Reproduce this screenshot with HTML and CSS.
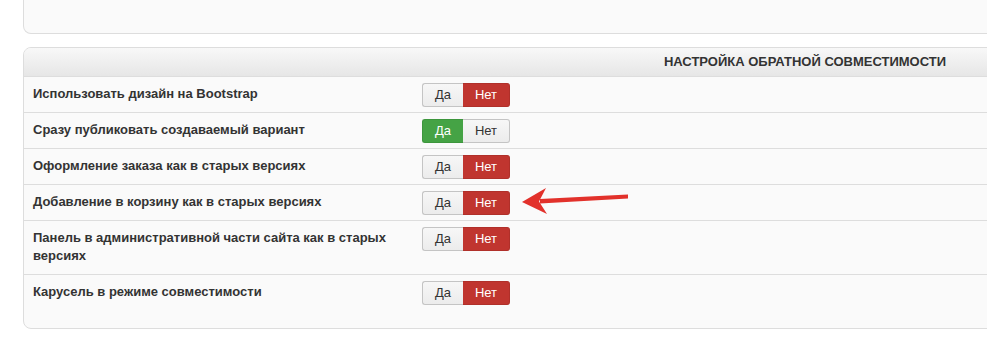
FILE: index.html
```html
<!DOCTYPE html>
<html lang="ru">
<head>
    <meta charset="UTF-8">
    <title>Настройка обратной совместимости</title>
    <link rel="stylesheet" href="styles.css">
</head>
<body>
<div class="page">
    <div class="box-prev"></div>

    <div class="panel">
        <div class="panel-head">Настройка обратной совместимости</div>

        <div class="row">
            <div class="label">Использовать дизайн на Bootstrap</div>
            <div class="toggle">
                <span class="opt">Да</span>
                <span class="opt no on">Нет</span>
            </div>
        </div>
        <div class="row">
            <div class="label">Сразу публиковать создаваемый вариант</div>
            <div class="toggle">
                <span class="opt yes on">Да</span>
                <span class="opt no">Нет</span>
            </div>
        </div>
        <div class="row">
            <div class="label">Оформление заказа как в старых версиях</div>
            <div class="toggle">
                <span class="opt">Да</span>
                <span class="opt no on">Нет</span>
            </div>
        </div>
        <div class="row">
            <div class="label">Добавление в корзину как в старых версиях</div>
            <div class="toggle">
                <span class="opt">Да</span>
                <span class="opt no on">Нет</span>
            </div>
        </div>
        <div class="row">
            <div class="label">Панель в административной части сайта как в старых версиях</div>
            <div class="toggle">
                <span class="opt">Да</span>
                <span class="opt no on">Нет</span>
            </div>
        </div>
        <div class="row">
            <div class="label">Карусель в режиме совместимости</div>
            <div class="toggle">
                <span class="opt">Да</span>
                <span class="opt no on">Нет</span>
            </div>
        </div>
    </div>
</div>

<!-- стрелка поверх страницы -->
<svg class="arrow" width="987" height="355" viewBox="0 0 987 355">
    <path d="M628 194.5 L540 199 L540 203.5 L628 198.5 Z" fill="#e2312b"/>
    <path d="M522 202 L546 188 L539 201.5 L547 214 Z" fill="#e2312b"/>
</svg>
</body>
</html>
```

FILE: styles.css
```css
body {
    margin: 0;
    background: #fff;
    font-family: "Liberation Sans", Arial, sans-serif;
    font-size: 13px;
    color: #333;
    overflow: hidden;
}
.page {
    padding-left: 23px;
    overflow: hidden;
}
.box-prev {
    width: 1564px;
    height: 34px;
    box-sizing: border-box;
    background: #fafafa;
    border: 1px solid #ddd;
    border-top: none;
    border-radius: 0 0 8px 8px;
    margin-bottom: 13px;
}
.panel {
    width: 1564px;
    box-sizing: border-box;
    background: #fafafa;
    border: 1px solid #ddd;
    border-radius: 8px;
    padding-bottom: 18px;
}
.panel-head {
    height: 28px;
    line-height: 28px;
    text-align: center;
    font-weight: bold;
    text-transform: uppercase;
    background: linear-gradient(to bottom, #f8f8f8, #e6e6e6);
    border-radius: 7px 7px 0 0;
}
.row {
    display: grid;
    grid-template-columns: 380px auto;
    column-gap: 9px;
    align-items: start;
    padding: 6px 10px 5px 9px;
    border-top: 1px solid #ddd;
}
.label {
    font-weight: bold;
    line-height: 18px;
    padding: 2px 0 4px;
}
.toggle {
    display: flex;
    width: 88px;
    height: 24px;
}
.opt {
    box-sizing: border-box;
    height: 24px;
    line-height: 22px;
    text-align: center;
    width: 41px;
    background: linear-gradient(to bottom, #f7f7f7, #ececec);
    border: 1px solid #c4c4c4;
    color: #333;
    border-radius: 3px 0 0 3px;
    border-right: none;
}
.opt.no {
    width: 47px;
    border-radius: 0 3px 3px 0;
    border-right: 1px solid #c4c4c4;
    border-left: none;
}
.opt.yes.on {
    background: #45a345;
    border-color: #3d963d;
    color: #fff;
}
.opt.no.on {
    background: #c0352f;
    border-color: #b0302a;
    color: #fff;
}
.arrow {
    position: absolute;
    top: 0;
    left: 0;
    pointer-events: none;
}
```
